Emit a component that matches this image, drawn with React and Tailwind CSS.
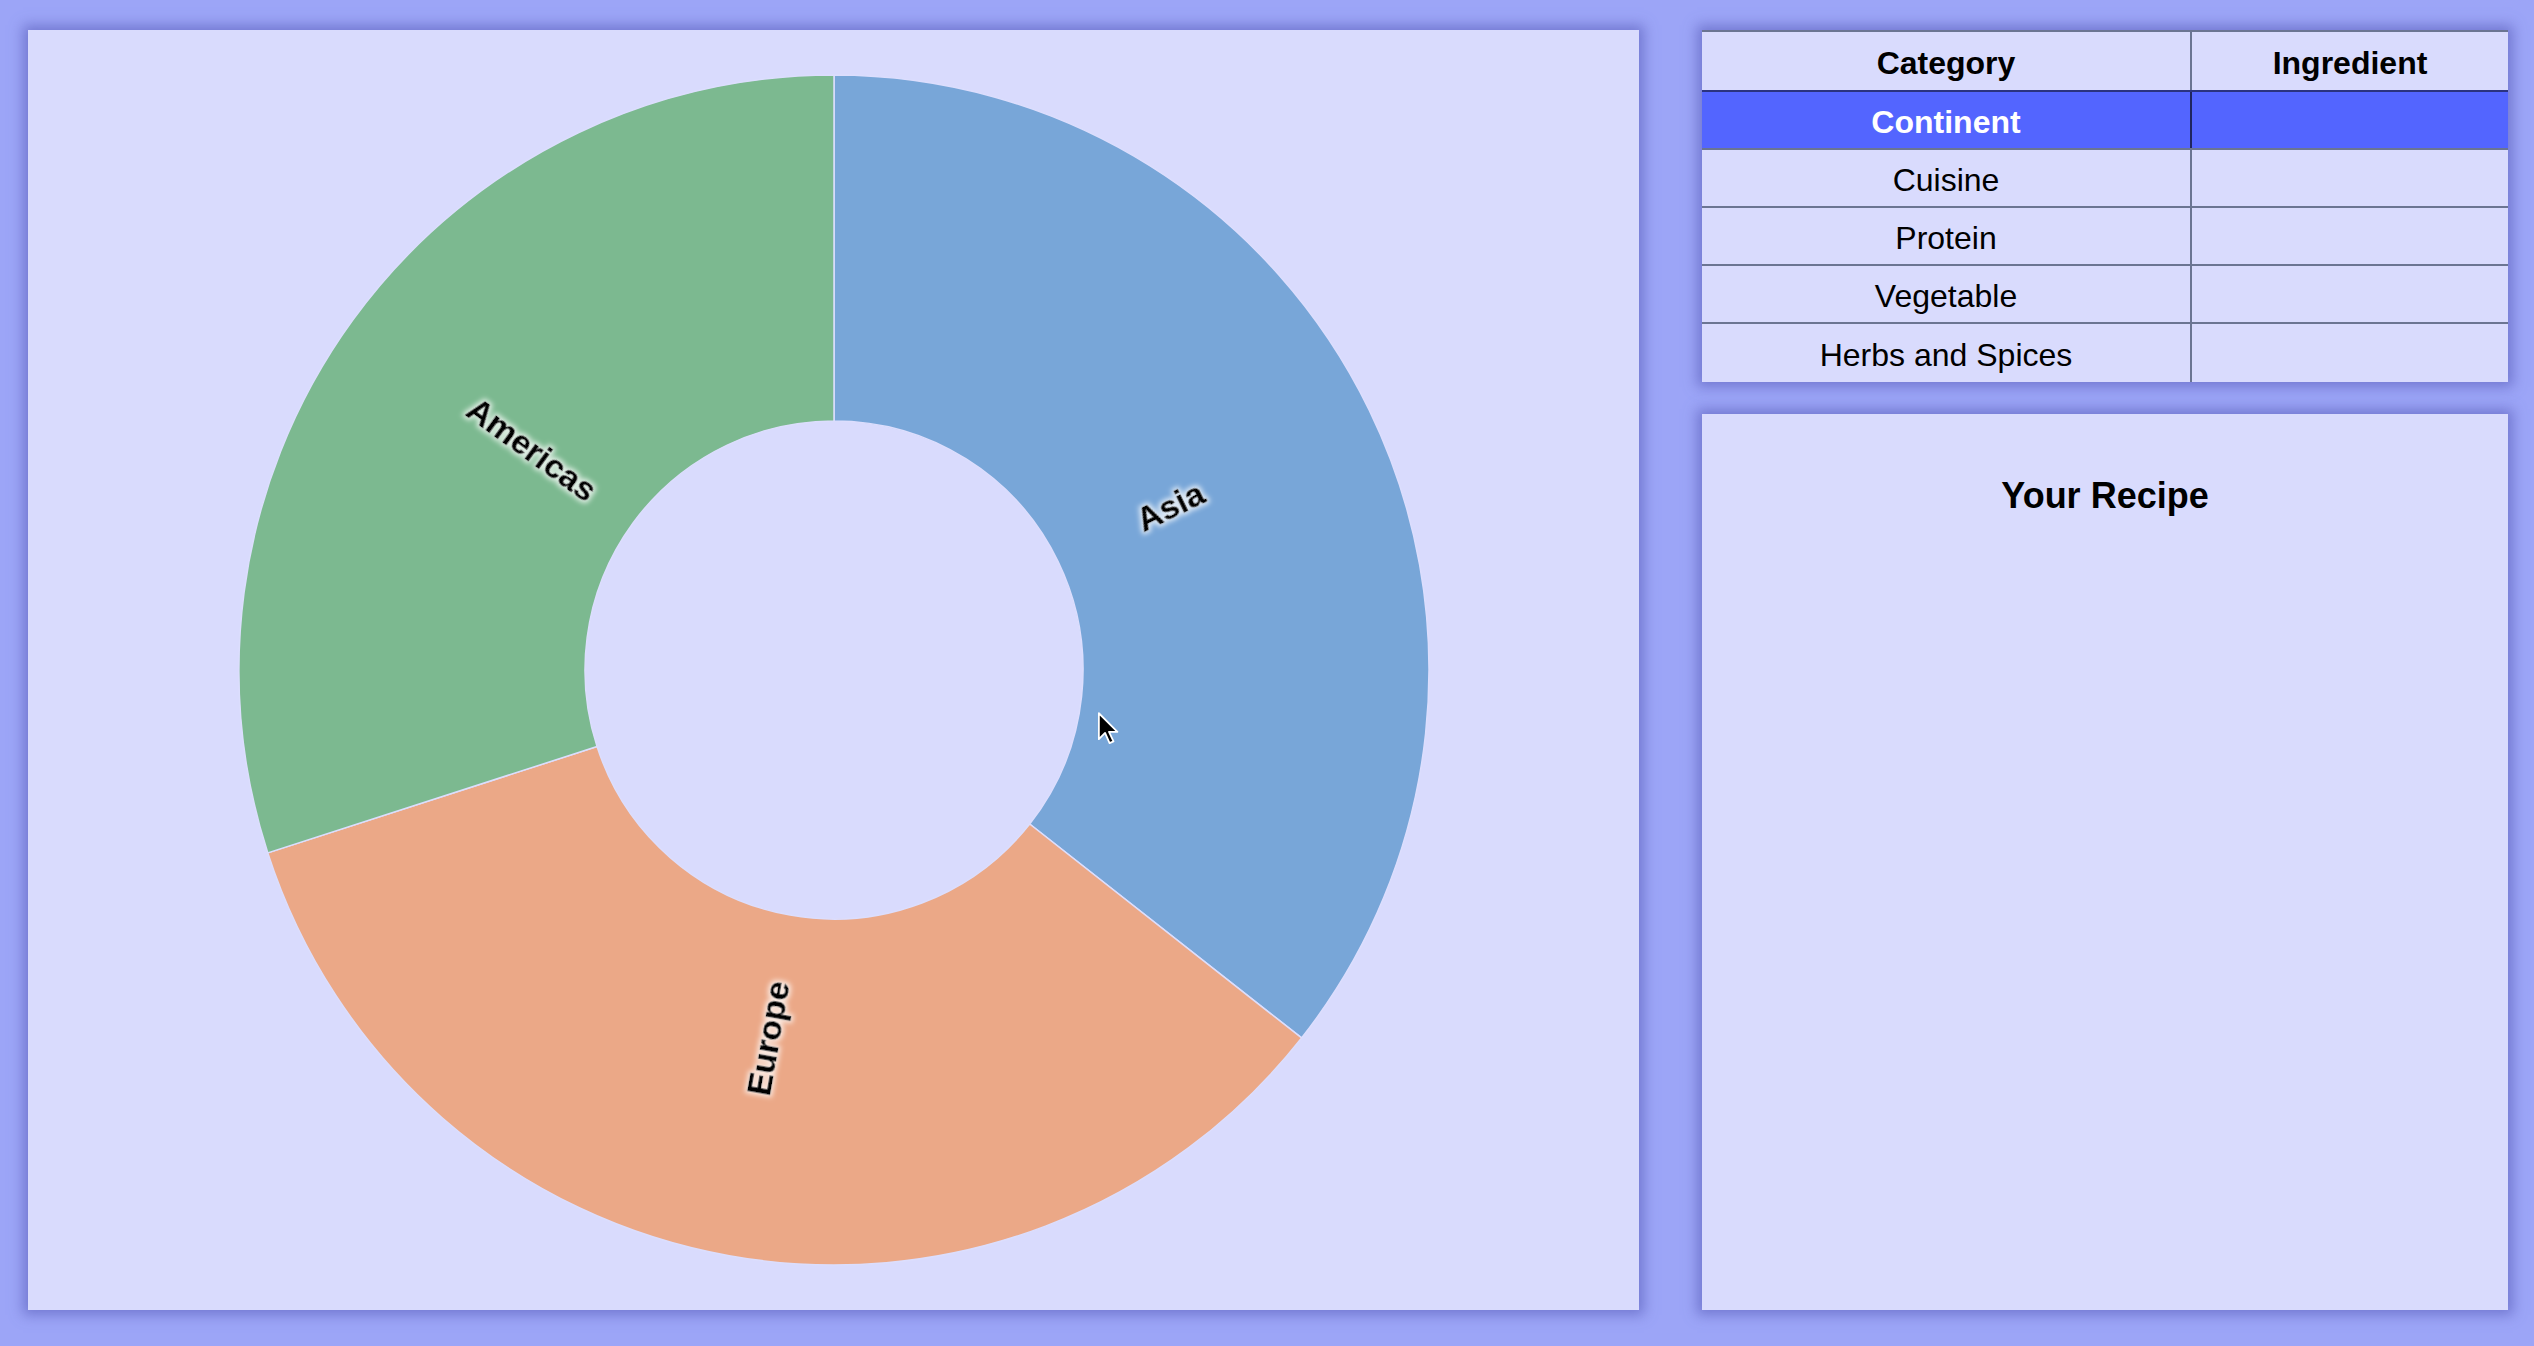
import React from 'react';

const CX = 805;
const CY = 640;
const R_OUT = 595;
const R_IN = 249;
const R_LABEL = 374;

const slices = [
  { name: 'Asia', from: 0, to: 128.2, color: '#78a6d8' },
  { name: 'Europe', from: 128.2, to: 252.1, color: '#eba887' },
  { name: 'Americas', from: 252.1, to: 360, color: '#7cb990' },
];

const rows = ['Continent', 'Cuisine', 'Protein', 'Vegetable', 'Herbs and Spices'];

function pt(angle, r){
  const a = angle * Math.PI / 180;
  return [CX + r * Math.sin(a), CY - r * Math.cos(a)];
}

function arcPath(a0, a1){
  const big = a1 - a0 > 180 ? 1 : 0;
  const [x0, y0] = pt(a0, R_OUT);
  const [x1, y1] = pt(a1, R_OUT);
  const [x2, y2] = pt(a1, R_IN);
  const [x3, y3] = pt(a0, R_IN);
  return `M${x0} ${y0} A${R_OUT} ${R_OUT} 0 ${big} 1 ${x1} ${y1} L${x2} ${y2} A${R_IN} ${R_IN} 0 ${big} 0 ${x3} ${y3} Z`;
}

function Donut(){
  return (
    <svg width="1610" height="1280" viewBox="0 0 1610 1280">
      <defs>
        <filter id="halo" x="-30%" y="-60%" width="160%" height="220%">
          <feMorphology in="SourceAlpha" operator="dilate" radius="2" result="d" />
          <feGaussianBlur in="d" stdDeviation="2.5" result="b" />
          <feFlood floodColor="#ffffff" floodOpacity="0.75" />
          <feComposite in2="b" operator="in" result="g" />
          <feMerge>
            <feMergeNode in="g" />
            <feMergeNode in="SourceGraphic" />
          </feMerge>
        </filter>
      </defs>
      {slices.map(s => (
        <path key={s.name} d={arcPath(s.from, s.to)} fill={s.color} stroke="#dcdefd" strokeWidth="1.5" />
      ))}
      {slices.map(s => {
        const mid = (s.from + s.to) / 2;
        const [x, y] = pt(mid, R_LABEL);
        let rot = mid - 90;
        if(mid > 180) rot -= 180;
        return (
          <text key={s.name} x={x} y={y} transform={`rotate(${rot} ${x} ${y})`}
            textAnchor="middle" dominantBaseline="central" filter="url(#halo)"
            fontFamily="'Liberation Sans', Arial, sans-serif" fontWeight="700" fontSize="33.5"
            fill="#000" stroke="#000" strokeWidth="0.6">
            {s.name}
          </text>
        );
      })}
    </svg>
  );
}

function Cursor(){
  return (
    <svg className="absolute left-[1068px] top-[681px]" width="26" height="36" viewBox="0 0 22 32">
      <path d="M2 2 V25 L7.5 19.5 L11.5 28.5 L15 27 L11 18.5 L18.5 18.5 Z" fill="#000" stroke="#fff" strokeWidth="1.6" strokeLinejoin="round" />
    </svg>
  );
}

export default function App(){
  return (
    <div className="flex h-screen w-full gap-[63px] bg-[#9ca5f7] pt-[30px] pb-[36px] pl-[28px] pr-[26px] font-['Liberation_Sans',Arial,sans-serif] text-black">
      <div className="relative flex flex-1 items-center justify-center bg-[#d9dbfd] shadow-[0_0_12px_5px_rgba(105,110,200,0.8)]">
        <Donut />
        <Cursor />
      </div>

      <div className="flex w-[806px] flex-col gap-[32px]">
        <div className="bg-[#d9dbfd] shadow-[0_0_12px_5px_rgba(105,110,200,0.8)]">
          <div className="border-t-2 border-[#6b7592]">
            <div className="grid h-[60px] grid-cols-[490px_1fr] border-b-2 border-[#2b3380] text-[32px] font-bold">
              <div className="flex items-center justify-center border-r-2 border-[#6b7592] pt-[3px]">Category</div>
              <div className="flex items-center justify-center pt-[3px]">Ingredient</div>
            </div>
            {rows.map((r, i) => (
              <div key={r}
                className={i === 0
                  ? 'grid h-[58px] grid-cols-[490px_1fr] border-b-2 border-[#6b7592] bg-[#5365ff] text-[32px] font-bold text-white'
                  : i === rows.length - 1
                    ? 'grid h-[58px] grid-cols-[490px_1fr] text-[32px]'
                    : 'grid h-[58px] grid-cols-[490px_1fr] border-b-2 border-[#6b7592] text-[32px]'}>
                <div className={i === 0
                  ? 'flex items-center justify-center border-r-2 border-[#1f2560] pt-[3px]'
                  : 'flex items-center justify-center border-r-2 border-[#6b7592] pt-[3px]'}>{r}</div>
                <div></div>
              </div>
            ))}
          </div>
        </div>

        <div className="flex-1 bg-[#d9dbfd] pt-[61px] shadow-[0_0_12px_5px_rgba(105,110,200,0.8)]">
          <h2 className="text-center text-[36px] font-bold leading-[41px]">Your Recipe</h2>
        </div>
      </div>
    </div>
  );
}
